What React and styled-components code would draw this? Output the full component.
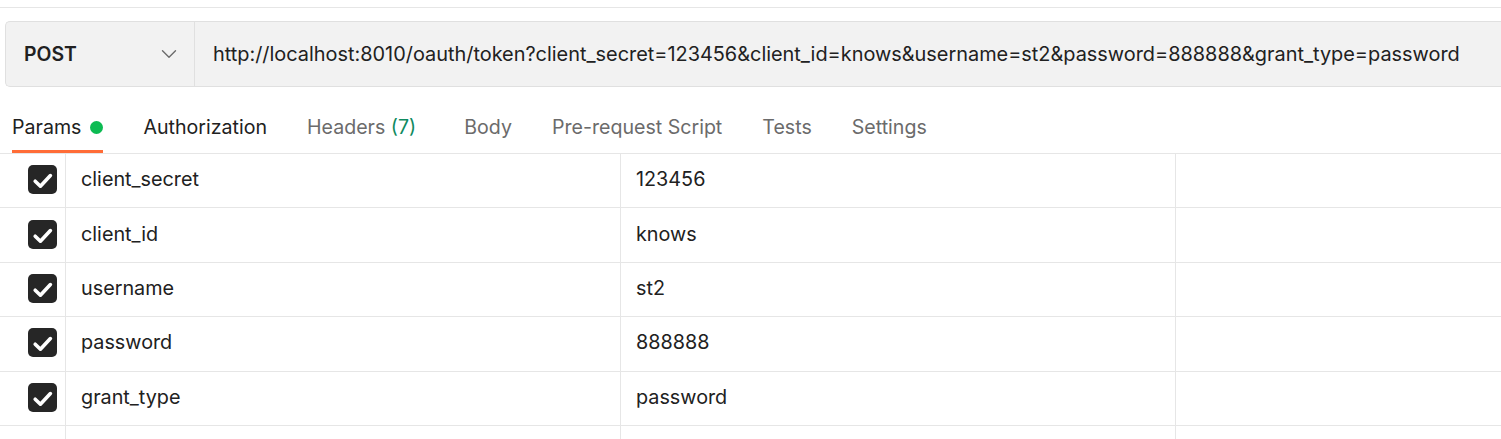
import styled, { createGlobalStyle } from "styled-components";

const GlobalStyle = createGlobalStyle`
  body {
    margin: 0;
    background: #ffffff;
    font-family: Inter, "Noto Sans", sans-serif;
    color: #212121;
  }
`;

const params = [
  { key: "client_secret", value: "123456" },
  { key: "client_id", value: "knows" },
  { key: "username", value: "st2" },
  { key: "password", value: "888888" },
  { key: "grant_type", value: "password" },
];

const tabs = [
  { label: "Params", active: true, dot: true },
  { label: "Authorization", strong: true },
  { label: "Headers", count: 7 },
  { label: "Body" },
  { label: "Pre-request Script" },
  { label: "Tests" },
  { label: "Settings" },
];

function Chevron() {
  return (
    <svg width="16" height="10" viewBox="0 0 16 10" fill="none">
      <path d="M1.5 1.8l6.5 6.4 6.5-6.4" stroke="#6b6b6b" strokeWidth="1.4" strokeLinecap="round" strokeLinejoin="round" />
    </svg>
  );
}

function Check() {
  return (
    <Box>
      <svg width="29" height="29" viewBox="0 0 29 29" fill="none">
        <path d="M7.2 16.2l5.2 5 10-10.6" stroke="#ffffff" strokeWidth="3.6" strokeLinecap="round" strokeLinejoin="round" />
      </svg>
    </Box>
  );
}

export default function App() {
  const url =
    "http://localhost:8010/oauth/token?client_secret=123456&client_id=knows&username=st2&password=888888&grant_type=password";

  return (
    <Page>
      <GlobalStyle />
      <TopRule />
      <UrlBar>
        <Method>
          <span>POST</span>
          <Chevron />
        </Method>
        <UrlText>{url}</UrlText>
      </UrlBar>
      <Tabs>
        {tabs.map((t) => (
          <Tab
            key={t.label}
            $active={t.active}
            $strong={t.strong || t.active}
            $extra={t.count != null}
          >
            <span>
              {t.label}
              {t.count != null && <Count> ({t.count})</Count>}
            </span>
            {t.dot && <Dot />}
          </Tab>
        ))}
      </Tabs>
      <Table>
        {params.map((p) => (
          <Row key={p.key}>
            <CheckCell>
              <Check />
            </CheckCell>
            <Cell>{p.key}</Cell>
            <Cell>{p.value}</Cell>
            <Cell />
          </Row>
        ))}
        <Row>
          <CheckCell />
          <Cell />
          <Cell />
          <Cell />
        </Row>
      </Table>
    </Page>
  );
}

const Page = styled.div`
  width: 1501px;
  height: 439px;
  overflow: hidden;
  padding-top: 7px;
  box-sizing: border-box;
`;

const TopRule = styled.div`
  height: 1px;
  background: #e6e6e6;
`;

const UrlBar = styled.div`
  display: flex;
  align-items: stretch;
  height: 64px;
  margin: 13px 0 0 5px;
  background: #f2f2f2;
  border: 1px solid #e0e0e0;
  border-right: none;
  border-radius: 5px 0 0 5px;
`;

const Method = styled.div`
  width: 189px;
  box-sizing: border-box;
  display: flex;
  align-items: center;
  justify-content: space-between;
  padding: 0 17px 0 18px;
  border-right: 1px solid #e0e0e0;
  font-size: 19.4px;
  font-weight: 600;
  color: #212121;
`;

const UrlText = styled.div`
  display: flex;
  align-items: center;
  padding-left: 18px;
  font-size: 19.9px;
  color: #212121;
  white-space: nowrap;
`;

const Tabs = styled.div`
  display: flex;
  gap: 40px;
  height: 67px;
  padding-left: 12px;
  border-bottom: 1px solid #e6e6e6;
  box-sizing: border-box;
`;

const Tab = styled.div`
  position: relative;
  display: flex;
  align-items: center;
  gap: 9px;
  padding-top: 14px;
  margin-right: ${(p) => (p.$extra ? "8px" : "0")};
  font-size: 19.6px;
  color: ${(p) => (p.$strong ? "#212121" : "#6b6b6b")};

  &::after {
    content: "";
    display: ${(p) => (p.$active ? "block" : "none")};
    position: absolute;
    left: 0;
    right: 0;
    bottom: 0;
    height: 3px;
    background: #ff6c37;
  }
`;

const Count = styled.span`
  color: #0f8a5f;
`;

const Dot = styled.span`
  width: 13px;
  height: 13px;
  border-radius: 50%;
  background: #0cbb52;
`;

const Table = styled.div`
  display: flex;
  flex-direction: column;
`;

const Row = styled.div`
  display: grid;
  grid-template-columns: 65px 555px 555px 1fr;
  height: 54.4px;
  border-bottom: 1px solid #e6e6e6;
  box-sizing: border-box;
`;

const Cell = styled.div`
  display: flex;
  align-items: center;
  padding: 0 0 3px 15px;
  border-left: 1px solid #e6e6e6;
  font-size: 19.8px;
  color: #212121;
`;

const CheckCell = styled.div`
  display: flex;
  align-items: center;
  padding: 0 0 2px 28px;
`;

const Box = styled.div`
  width: 29px;
  height: 29px;
  border-radius: 5px;
  background: #262626;
  display: flex;
  align-items: center;
  justify-content: center;
`;
